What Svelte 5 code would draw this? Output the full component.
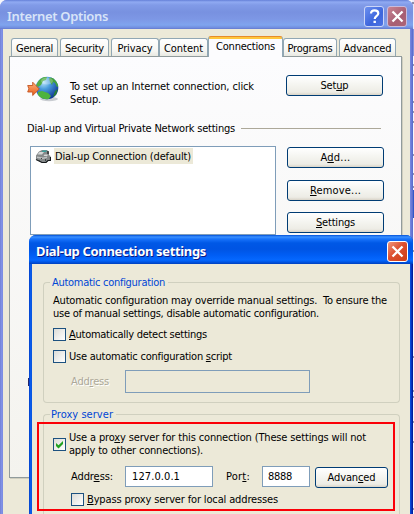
<script>
  const tabs = [
    { label: 'General', left: 2, w: 47, text: 37 },
    { label: 'Security', left: 2, w: 49, text: 39 },
    { label: 'Privacy', left: 2, w: 48, text: 35 },
    { label: 'Content', left: 0, w: 49, text: 39 },
    { label: 'Connections', left: 0, w: 75, text: 59, active: true },
    { label: 'Programs', left: 0, w: 54, text: 45 },
    { label: 'Advanced', left: 2, w: 57, text: 48 }
  ];

  // Spreads the letters so that a line takes up the given width.
  function fit(node, width) {
    const natural = node.getBoundingClientRect().width;
    const count = node.textContent.length;
    node.style.letterSpacing = `${(width - natural) / count}px`;
  }
</script>

{#snippet cross()}
  <svg width="13" height="13" viewBox="0 0 13 13"><path d="M1.5 1.5 11.5 11.5M11.5 1.5 1.5 11.5" stroke="#fff" stroke-width="2.3" fill="none" /></svg>
{/snippet}

<div class="screen">
  <svg class="behind" width="2" height="514" viewBox="0 0 2 514">
    <path d="M0 0h2v29H0z" fill="#e8ebfa" />
    <path d="M0 29h2v27H0z" fill="#8493dd" />
    <path d="M0 190h2v28H0z" fill="#3159c8" />
    <path d="M0 3h2M0 65h2M0 75h2M0 102h2M0 112h2M0 122h2M0 155h2M0 174h2M0 187h2M0 251h2M0 357h2M0 391h2M0 397h2M0 422h2M0 442h2M0 509h2" stroke="#30305c" />
  </svg>

  <div class="outer">
    <header class="title dim">
      <span class="name" use:fit={101}>Internet Options</span>
      <span class="cap help"><svg width="13" height="15" viewBox="0 0 13 15"><path d="M3 4.6C3 2.3 4.4 1.3 6.5 1.3S10.3 2.5 10.3 4.4C10.3 6.7 6.7 7 6.7 10" fill="none" stroke="#fff" stroke-width="2.2" /><path d="M5.5 11.7h2.4V14H5.5z" fill="#fff" /></svg></span>
      <span class="cap close-dim">{@render cross()}</span>
    </header>
    <div class="outer-body">
      <nav class="tabs">
        {#each tabs as t}
          <div class="tab" class:active={t.active} style:width="{t.w}px" style:margin-left="{t.left}px"><span use:fit={t.text}>{t.label}</span></div>
        {/each}
      </nav>
      <section class="panel">
        <div class="intro">
          <svg class="globe" width="34" height="28" viewBox="0 0 34 28">
            <defs>
              <radialGradient id="sea" cx="35%" cy="25%" r="75%"><stop offset="0" stop-color="#b9e4fa" /><stop offset=".4" stop-color="#4a9ddd" /><stop offset="1" stop-color="#123c98" /></radialGradient>
              <linearGradient id="arrow" x2="0" y2="1"><stop offset="0" stop-color="#ffb27a" /><stop offset="1" stop-color="#e85b18" /></linearGradient>
              <clipPath id="disc"><circle cx="20" cy="12" r="11.3" /></clipPath>
            </defs>
            <ellipse cx="22" cy="23" rx="9" ry="2.2" fill="#c9ccd1" />
            <circle cx="20" cy="12" r="11.3" fill="url(#sea)" />
            <g clip-path="url(#disc)">
              <path d="M9 9 12 4 16 1l4 0-1 3-3 1-2 4-3 2z" fill="#52ad45" />
              <path d="M22 2l4-1 4 4 2 5-2 1-2-4-2-1-1 3-2-3z" fill="#45a23c" />
              <path d="M11 16l4-1 6 2 3 3-3 4-6 1-4-4z" fill="#4eb33c" />
              <path d="M28 15l3-2-2 6-3 2z" fill="#287d37" />
              <ellipse cx="20" cy="5" rx="6" ry="3.5" fill="#fff" opacity=".25" />
            </g>
            <path d="M.7 9.5h5V6.2L12.3 13l-6.6 6.5V16h-5l1.2-3.2z" fill="url(#arrow)" stroke="#c45420" stroke-width=".9" />
          </svg>
          <p><span use:fit={184}>To set up an Internet connection, click</span><br /><span use:fit={31}>Setup.</span></p>
          <button class="btn"><span use:fit={28}>Set<u>u</u>p</span></button>
        </div>
        <div class="rule"><span use:fit={208}>Dial-up and Virtual Private Network settings</span><i></i></div>
        <div class="connections">
          <div class="list">
            <svg width="16" height="15" viewBox="0 0 16 15">
              <path d="M1 6.5 4 2.500 7 1h5l2 2v3l1.500 1v4L13 12l-2 2H7l-6-4z" fill="#85898a" />
              <path d="M4.500 3H9l-2 2.500H2.500zM9.500 5.500h3v1.500h-4z" fill="#d5d8d8" />
              <path d="M2 7.500 8 8.500 12 7.500v1.500L8 10 2 9z" fill="#c0c3c4" />
              <path d="M7.500 1.500H12L11 3H7z" fill="#37a09c" />
              <path d="M1 10.500 7 13.500h4l2-2h2.500V8M13 2v3" fill="none" stroke="#15191b" stroke-width="1.200" />
              <path d="M4 11h1v1H4zM6 9h1v1H6zM10 10h1v2h-1z" fill="#3e4446" />
            </svg>
            <span class="sel"><span use:fit={136}>Dial-up Connection (default)</span></span>
          </div>
          <div class="side">
            <button class="btn"><span use:fit={30}>A<u>d</u>d...</span></button>
            <button class="btn"><span use:fit={51}><u>R</u>emove...</span></button>
            <button class="btn"><span use:fit={39}><u>S</u>ettings</span></button>
          </div>
        </div>
      </section>
    </div>
    <i class="stub"></i>
  </div>

  <div class="inner">
    <header class="title live">
      <span class="name" use:fit={170}>Dial-up Connection settings</span>
      <span class="cap close">{@render cross()}</span>
    </header>
    <div class="inner-body">
      <section class="group auto">
        <div class="legend"><i></i><span use:fit={113}>Automatic configuration</span><i class="grow"></i></div>
        <div class="frame">
          <p><span use:fit={334}>Automatic configuration may override manual settings.&nbsp; To ensure the</span><br /><span use:fit={266}>use of manual settings, disable automatic configuration.</span></p>
          <div class="check first"><i class="box"></i><span use:fit={138}><u>A</u>utomatically detect settings</span></div>
          <div class="check second"><i class="box"></i><span use:fit={163}>Use automatic configuration <u>s</u>cript</span></div>
          <div class="script-row"><div class="off"><span use:fit={38}>Add<u>r</u>ess</span></div><div class="field disabled"></div></div>
        </div>
      </section>
      <section class="group proxy">
        <div class="legend"><i></i><span use:fit={62}>Proxy server</span><i class="grow"></i></div>
        <div class="frame">
          <div class="check use">
            <i class="box"><svg width="11" height="11" viewBox="0 0 11 11"><path d="M2 4v3l2.500 2.500L9 5V2L4.500 6.300z" fill="#21a121" /></svg></i>
            <p><span use:fit={297}>Use a pro<u>x</u>y server for this connection (These settings will not</span><br /><span use:fit={134}>apply to other connections).</span></p>
          </div>
          <div class="address-row">
            <div class="lab"><span use:fit={42}>Addr<u>e</u>ss:</span></div>
            <div class="field host"><span use:fit={48}>127.0.0.1</span></div>
            <div class="port-label"><span use:fit={24}>Por<u>t</u>:</span></div>
            <div class="field port"><span use:fit={24}>8888</span></div>
            <button class="btn adv"><span use:fit={48}>Advan<u>c</u>ed</span></button>
          </div>
          <div class="check bypass"><i class="box"></i><span use:fit={191}><u>B</u>ypass proxy server for local addresses</span></div>
        </div>
      </section>
    </div>
    <div class="highlight"></div>
  </div>
</div>

<style>
  * { box-sizing: border-box; }
  .screen {
    position: relative; width: 414px; height: 514px; overflow: hidden; background: #f7f7fb; color: #000;
    font: 11px/13px "Tahoma", "DejaVu Sans Condensed", sans-serif; white-space: nowrap;
  }
  span, p { white-space: nowrap; }
  p { margin: 0; }
  p span { display: inline-block; }
  u { text-decoration: underline; text-underline-offset: 1px; text-decoration-thickness: 1px; text-decoration-skip-ink: none; }
  svg { display: block; flex: none; }
  .behind { position: absolute; right: 0; top: 0; }

  .outer {
    width: 413px; height: 514px; border-radius: 7px 7px 0 0; overflow: hidden;
    background: linear-gradient(90deg, #6a78cf 0, #8192e6 1px, #7a8be2 3px, #7a8be2 410px, #5868ca 413px); position: relative;
  }
  .title { display: flex; align-items: center; height: 29px; }
  .dim {
    padding: 3px 6px 0 7px;
    background: linear-gradient(#6580d8 0, #90aaf2 2px, #819be8 5px, #7891e0 12px, #7d97e5 19px, #7fa4ee 25px, #6f8bdd 28px, #6176cd 29px);
  }
  .name { font: 700 13px/16px "Trebuchet MS", "Noto Sans", sans-serif; margin-right: auto; }
  .dim .name { color: #d8e4f8; font-weight: 600; }
  .cap { display: flex; align-items: center; justify-content: center; width: 20px; height: 21px; border: 1px solid #cbd5f8; border-radius: 3px; }
  .help { background: linear-gradient(135deg, #6c90ef, #3d65dc 60%, #4e73e4); margin-right: 3px; }
  .close-dim { background: linear-gradient(135deg, #c98493, #a75e73 60%, #ad6577); border-color: #c8bbdc; }
  .outer-body { margin: 0 3px; height: 485px; background: #ece9d8; padding: 7px 8px 0 6px; }
  .tabs { display: flex; align-items: flex-end; height: 20px; }
  .tab {
    height: 18px; border: 1px solid #91a7b4; border-bottom: 0; border-radius: 3px 3px 0 0; flex: none;
    background: linear-gradient(#fff, #f6f6f2 70%, #e9e9e2); display: flex; justify-content: center; padding-top: 3px;
  }
  .tab.active {
    height: 21px; margin-bottom: -1px; border-top: 1px solid #e68b2c; background: linear-gradient(#ffc73c 2px, #fcfcfe 2px);
    position: relative; padding-top: 3px;
  }
  .panel {
    height: 422px; border: 1px solid #919b9c; box-shadow: 1px 1px 0 #d0cebf; background: linear-gradient(#fcfcfe, #f4f3ee);
    padding: 18px 17px 0;
  }
  .intro { display: flex; height: 48px; }
  .globe { margin-top: 1px; }
  .intro p { margin: 5px 0 0 9px; }
  .intro .btn { margin-left: auto; margin-right: 1px; }
  .btn {
    display: flex; align-items: center; justify-content: center; width: 97px; height: 21px; padding: 0; flex: none;
    border: 1px solid #003c74; border-radius: 3px; background: linear-gradient(#fff, #f4f4ef 50%, #edece5 85%, #d9d4c8);
    color: #000; font: inherit;
  }
  .rule { display: flex; align-items: center; height: 13px; margin-top: -1px; }
  .rule i { height: 1px; flex: 1; background: #aca899; margin: 0 3px 0 6px; }
  .rule span { margin-top: -1px; }
  .connections { display: flex; gap: 11px; margin: 11px 0 0 3px; }
  .list { display: flex; width: 246px; height: 89px; border: 1px solid #7f9db9; background: #fff; padding: 1px 4px; align-items: flex-start; }
  .list svg { margin-top: 1px; }
  .sel { background: #ece9d8; height: 16px; width: 139px; padding: 2px 0 0 1px; margin-left: 3px; display: block; }
  .sel span { display: inline-block; }
  .side { display: flex; flex-direction: column; gap: 11.5px; padding-top: 1px; }
  .stub { position: absolute; left: 28px; top: 378px; width: 2px; height: 8px; background: #26266a; }

  .inner {
    position: absolute; left: 29px; top: 235px; width: 384px; height: 279px; border-radius: 7px 7px 0 0; overflow: hidden;
    background: linear-gradient(90deg, #0035b8 0, #0a5cf0 1px, #0855dd 3px, #0855dd 381px, #0a3fd0 382px, #00138c 384px);
  }
  .live {
    padding: 3px 5px 0 7px; color: #fff;
    background: linear-gradient(#0050d8 0, #3b91ff 2px, #1873fb 4px, #0058e6 8px, #0054e3 14px, #005df4 20px, #0568ff 25px, #0055e5 27px, #0040bd 29px);
  }
  .live .name { text-shadow: 1px 1px 0 #0a1883; }
  .close { width: 21px; background: linear-gradient(135deg, #f0987c, #dc5030 45%, #cf3e14); border-color: #fff; }
  .inner-body { margin: 0 3px; height: 250px; background: #ece9d8; padding: 12px 10px 0 11px; }
  .group { display: flex; flex-direction: column; }
  .legend { display: flex; height: 13px; color: #0046d5; }
  .legend i { width: 7px; height: 7px; margin-top: 6px; border-top: 1px solid #d0d0bf; border-left: 1px solid #d0d0bf; border-radius: 4px 0 0; margin-right: 2px; flex: none; }
  .legend .grow { flex: 1; border-left: 0; border-right: 1px solid #d0d0bf; border-radius: 0 4px 0 0; margin: 6px 0 0 3px; }
  .frame { border: 1px solid #d0d0bf; border-top: 0; border-radius: 0 0 4px 4px; padding-left: 9px; }
  .auto .frame { height: 114px; }
  .frame > p { margin-top: 5px; }
  .check { display: flex; align-items: center; height: 13px; gap: 3px; }
  .box { display: block; width: 13px; height: 13px; flex: none; border: 1px solid #1c5180; background: linear-gradient(135deg, #dcdcd7, #fff); }
  .first { margin-top: 8px; }
  .second { margin-top: 9px; }
  .script-row { display: flex; align-items: center; margin: 7px 0 0 18px; }
  .off { color: #aca899; text-shadow: 1px 1px 0 #fff; width: 54px; flex: none; }
  .field { border: 1px solid #7f9db9; background: #fff; display: flex; align-items: center; flex: none; }
  .disabled { width: 185px; height: 23px; background: #ece9d8; }
  .proxy { margin-top: 5px; }
  .proxy .legend i:first-child { margin-right: 1px; }
  .proxy .frame { height: 120px; border-bottom: 0; }
  .use { margin-top: 10px; height: 26px; }
  .address-row { display: flex; align-items: flex-start; margin: 9px 0 0 18px; }
  .lab { width: 54px; padding-top: 4px; flex: none; }
  .host { width: 88px; height: 21px; padding-left: 6px; }
  .port-label { width: 24px; margin: 4px 12px 0 13px; }
  .port { width: 48px; height: 21px; padding-left: 5px; }
  .adv { width: 73px; margin: 1px 0 0 5px; }
  .bypass { margin: 5px 0 0 18px; }
  .highlight { position: absolute; left: 8px; top: 187px; width: 358px; height: 89px; border: 2px solid #fb0007; }
</style>
